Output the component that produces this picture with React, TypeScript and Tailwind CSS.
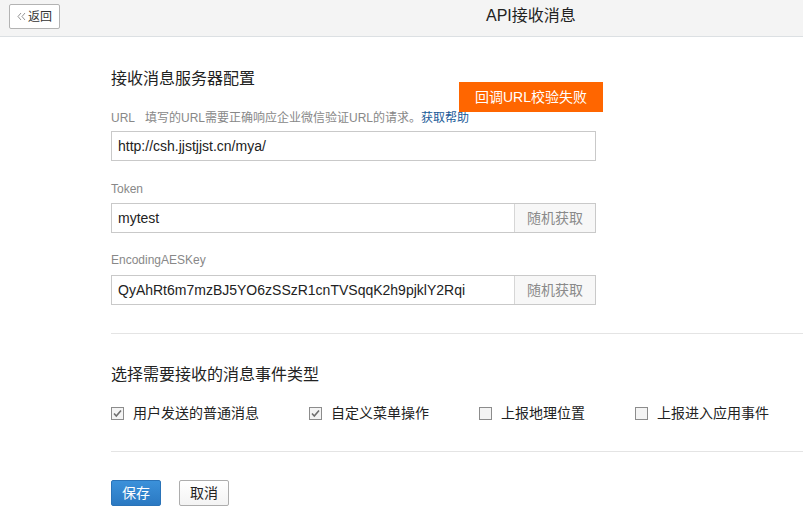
import React from 'react';

const font = { fontFamily: '"Liberation Sans", "Noto Sans CJK SC", sans-serif' };

const events = [
  { label: '用户发送的普通消息', checked: true },
  { label: '自定义菜单操作', checked: true },
  { label: '上报地理位置', checked: false },
  { label: '上报进入应用事件', checked: false },
];

const Checkbox: React.FC<{ checked: boolean }> = ({ checked }) => (
  <span className="flex h-[13px] w-[13px] items-center justify-center border border-[#8c8c8c] bg-[#f4f4f4]">
    {checked && (
      <svg width="11" height="11" viewBox="0 0 11 11">
        <path d="M2 5.5 L4.3 8 L9 2.5" fill="none" stroke="#6f6f6f" strokeWidth="1.6" />
      </svg>
    )}
  </span>
);

const Field: React.FC<{ value: string; random?: boolean }> = ({ value, random }) => (
  <div className="flex h-[30px] w-[485px] border border-[#c9c9c9] bg-white">
    <div className="flex flex-1 items-center pl-[6px] text-[14px] text-[#222]">{value}</div>
    {random && (
      <div className="flex w-[81px] items-center justify-center border-l border-[#d6d6d6] bg-[#f7f7f7] text-[14px] text-[#8a8a8a]">
        随机获取
      </div>
    )}
  </div>
);

export default function App() {
  return (
    <div className="relative min-h-[518px] w-[803px] overflow-hidden bg-white" style={font}>
      {/* header */}
      <div className="flex h-[37px] items-start border-b border-[#dce0e3] bg-[#f4f4f4]">
        <button className="ml-[9px] mt-[4px] flex h-[25px] w-[51px] items-center justify-center gap-[2px] rounded-[2px] border border-[#b3b3b3] bg-white text-[12px] text-[#333]">
          <svg width="9" height="9" viewBox="0 0 9 9">
            <path d="M4 1 L1 4.5 L4 8 M8 1 L5 4.5 L8 8" fill="none" stroke="#888" strokeWidth="0.9" />
          </svg>
          <span className="leading-none">返回</span>
        </button>
        <div className="ml-[426px] mt-[6px] text-[16px] leading-[20px] text-[#222]">API接收消息</div>
      </div>

      <div className="pl-[111px]">
        <div className="mt-[32px] text-[16px] leading-[20px] text-[#222]">接收消息服务器配置</div>

        <div className="mt-[21px] text-[12px] leading-[16px] text-[#888]">
          URL&nbsp;&nbsp; 填写的URL需要正确响应企业微信验证URL的请求。<span className="text-[#1a5a98]">获取帮助</span>
        </div>
        <div className="mt-[5px]">
          <Field value="http://csh.jjstjjst.cn/mya/" />
        </div>

        <div className="mt-[20px] text-[12px] leading-[16px] text-[#888]">Token</div>
        <div className="mt-[6px]">
          <Field value="mytest" random />
        </div>

        <div className="mt-[19px] text-[12px] leading-[16px] text-[#888]">EncodingAESKey</div>
        <div className="mt-[7px]">
          <Field value="QyAhRt6m7mzBJ5YO6zSSzR1cnTVSqqK2h9pjklY2Rqi" random />
        </div>

        <div className="mt-[28px] border-t border-[#e4e4e4]" />

        <div className="mt-[31px] text-[16px] leading-[20px] text-[#222]">选择需要接收的消息事件类型</div>

        <div className="mt-[19px] flex items-center gap-[50px] text-[14px] leading-[18px] text-[#222]">
          {events.map((e) => (
            <label key={e.label} className="flex items-center gap-[9px]">
              <Checkbox checked={e.checked} />
              <span>{e.label}</span>
            </label>
          ))}
        </div>

        <div className="mt-[29px] border-t border-[#e4e4e4]" />

        <div className="mt-[28px] flex gap-[18px]">
          <button className="flex h-[26px] w-[50px] items-center justify-center rounded-[2px] border border-[#2a73b8] bg-gradient-to-b from-[#3b91da] to-[#2b79c2] text-[14px] text-white">
            保存
          </button>
          <button className="flex h-[26px] w-[50px] items-center justify-center rounded-[2px] border border-[#adadad] bg-gradient-to-b from-white to-[#f3f3f3] text-[14px] text-[#222]">
            取消
          </button>
        </div>
      </div>

      {/* error tip */}
      <div className="absolute left-[459px] top-[82px] flex h-[30px] w-[144px] items-center justify-center bg-[#ff6600] text-[14px] text-white">
        回调URL校验失败
      </div>
    </div>
  );
}
